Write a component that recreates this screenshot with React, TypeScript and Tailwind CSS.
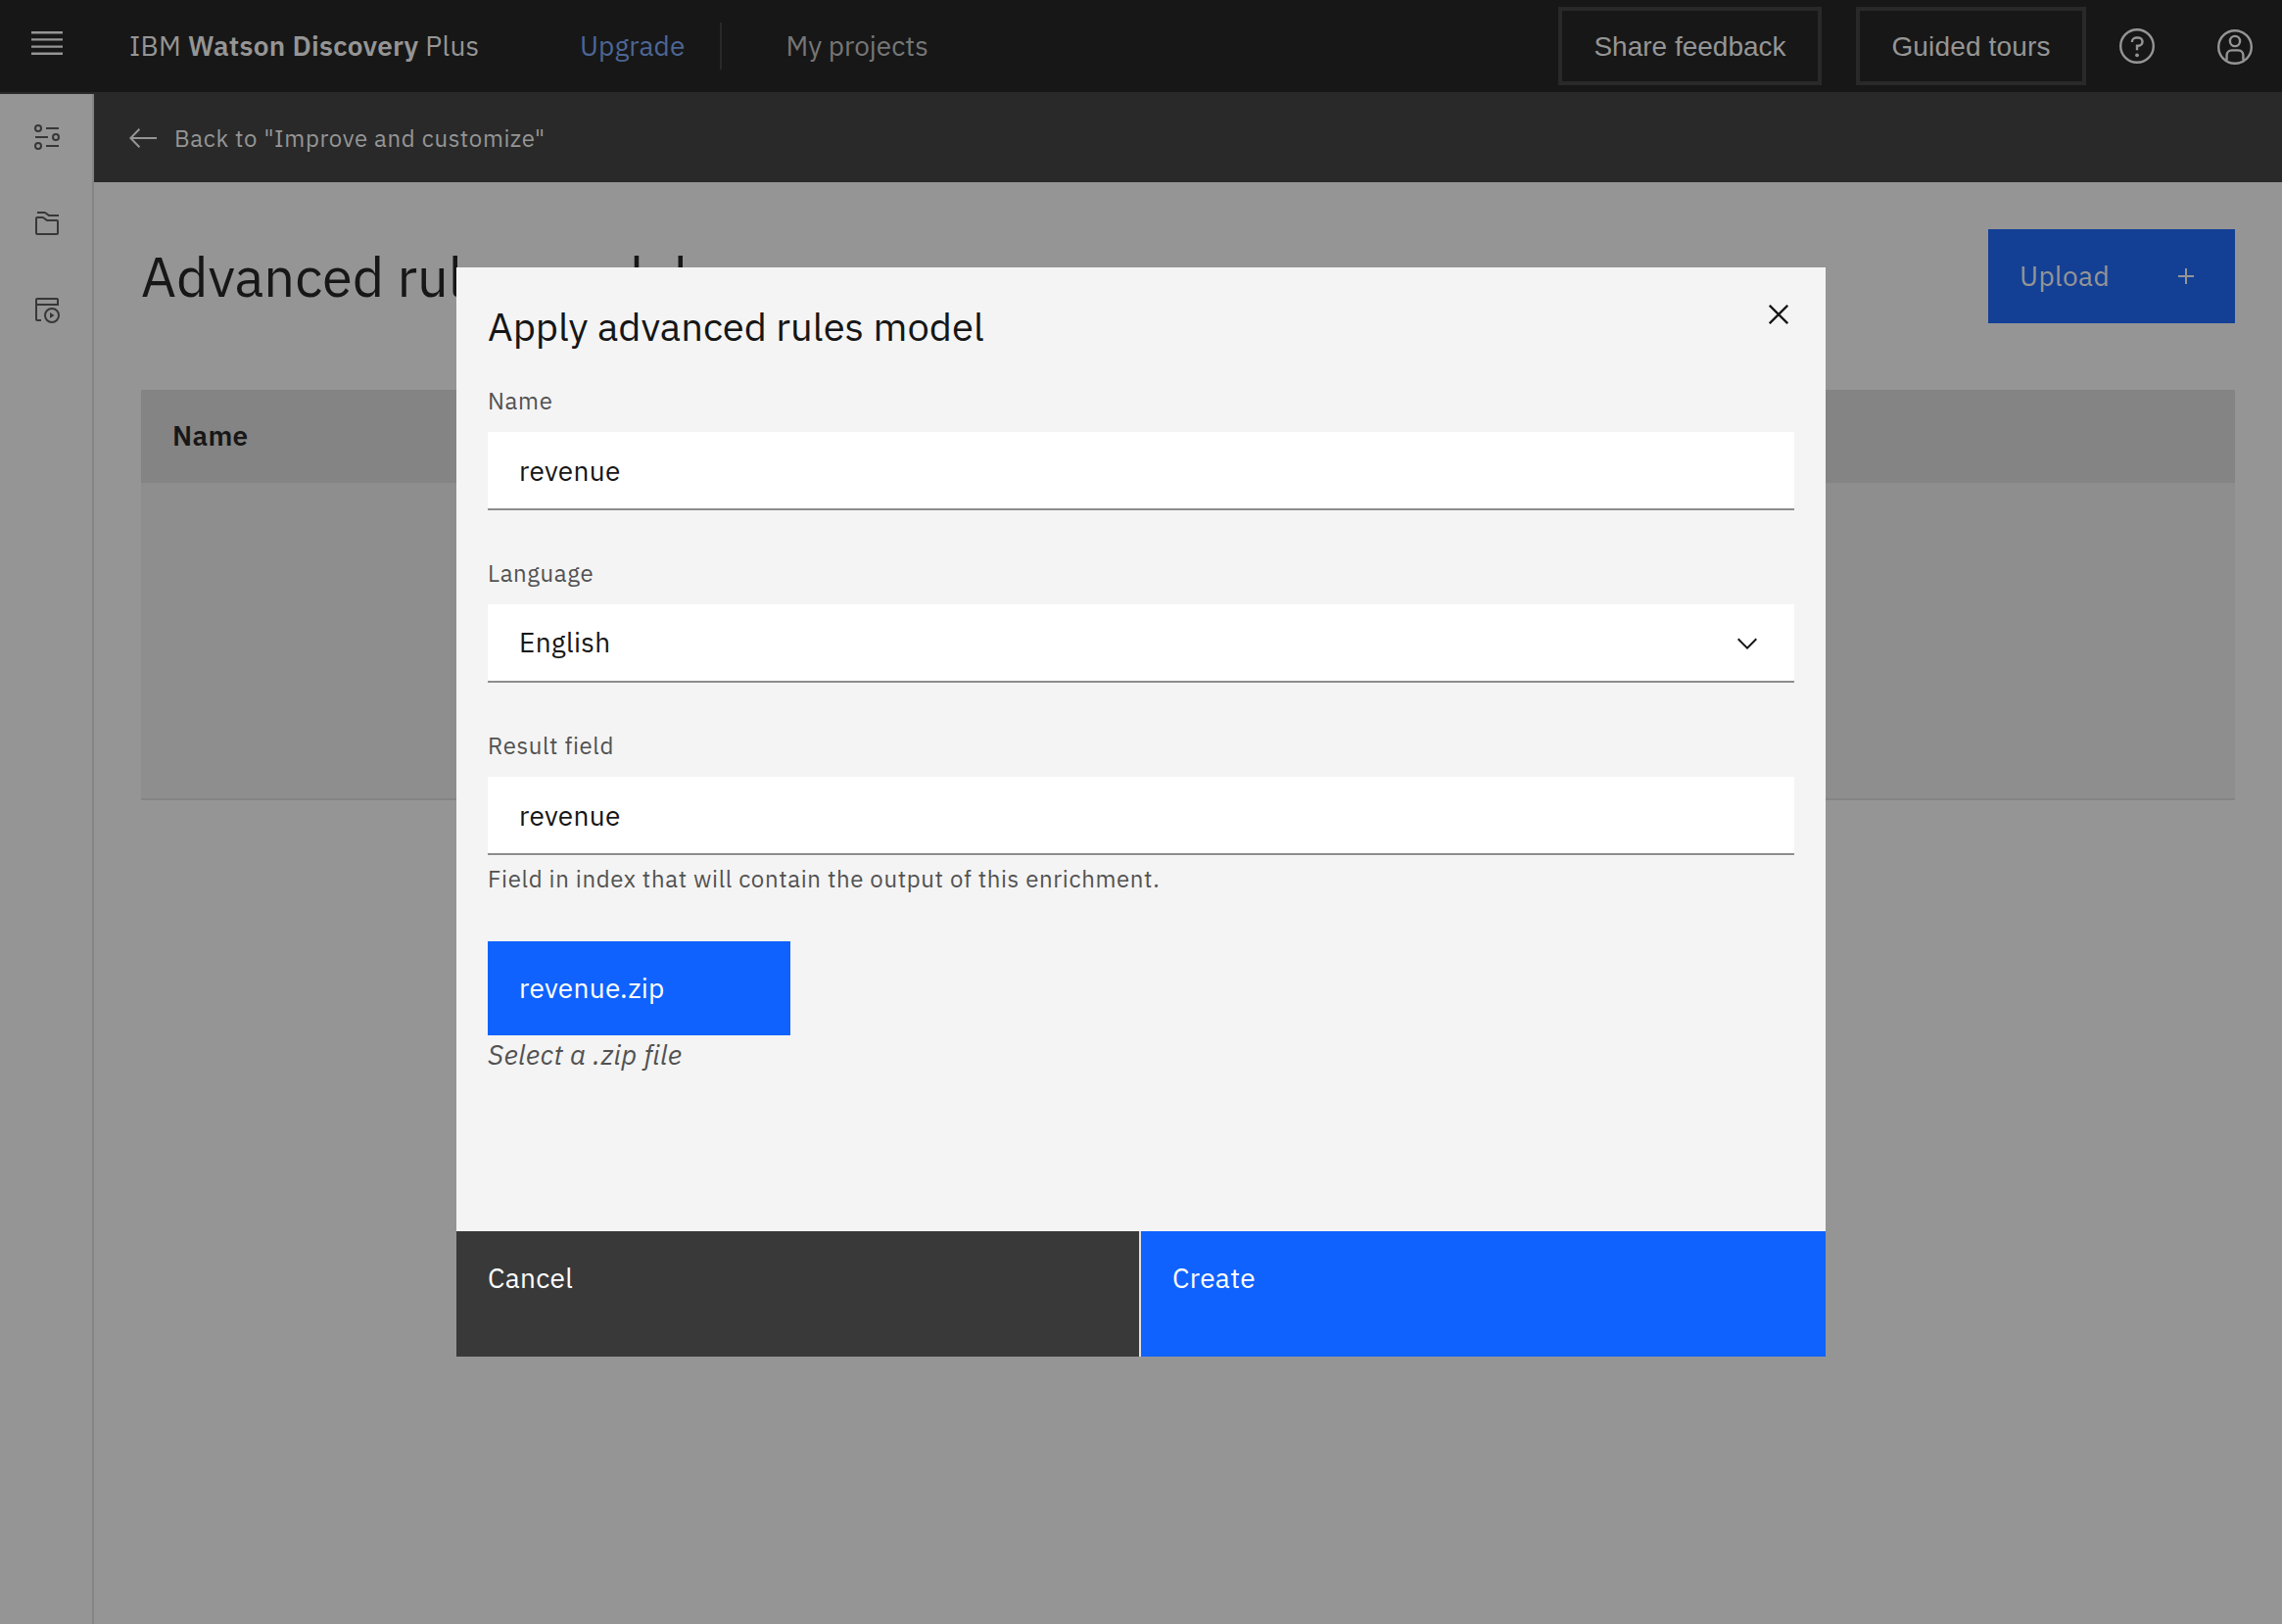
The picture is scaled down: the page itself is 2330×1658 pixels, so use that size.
import React from "react";

function HamburgerIcon() {
  return (
    <svg className="h-10 w-10 fill-[#959595]" viewBox="0 0 20 20">
      <path d="M2 14.8h16V16H2zM2 11.2h16v1.2H2zM2 7.6h16v1.2H2zM2 4h16v1.2H2z" />
    </svg>
  );
}

function HelpIcon() {
  return (
    <svg className="h-10 w-10" viewBox="0 0 40 40" fill="none" stroke="#959595" strokeWidth="2.4">
      <circle cx="20" cy="20" r="16.8" />
      <path d="M14.9 16v-.3a4.2 4.2 0 0 1 4.2-4.2h2.3a4.1 4.1 0 0 1 0 8.2H20v4.6" />
      <circle cx="20" cy="29.3" r="1.9" fill="#959595" stroke="none" />
    </svg>
  );
}

function UserIcon() {
  return (
    <svg className="h-10 w-10" viewBox="0 0 40 40" fill="none" stroke="#959595" strokeWidth="2.4">
      <circle cx="20" cy="20" r="16.8" />
      <circle cx="20" cy="14" r="5.1" />
      <path d="M11.6 33.6v-5.2a5 5 0 0 1 5-5h6.8a5 5 0 0 1 5 5v5.2" />
    </svg>
  );
}

function SlidersIcon() {
  return (
    <svg className="h-8 w-8" viewBox="0 0 32 32" fill="none" stroke="#373737" strokeWidth="2">
      <circle cx="7" cy="7" r="3" />
      <circle cx="25" cy="16" r="3" />
      <circle cx="7" cy="25" r="3" />
      <path d="M15 7h13M4 16h13M15 25h13" />
    </svg>
  );
}

function FoldersIcon() {
  return (
    <svg className="h-8 w-8 fill-[#373737]" viewBox="0 0 32 32">
      <path d="M26,28H6a2,2,0,0,1-2-2V11A2,2,0,0,1,6,9h5.67a2,2,0,0,1,1.2.4L16.33,12H26a2,2,0,0,1,2,2V26A2,2,0,0,1,26,28ZM11.67,11H6V26H26V14H15.67Z" />
      <path d="M28,9H17.67l-4-3H6V4h7.67a2,2,0,0,1,1.2.4L18.33,7H28Z" />
    </svg>
  );
}

function QueryRunIcon() {
  return (
    <svg className="h-8 w-8" viewBox="0 0 32 32" fill="none" stroke="#373737" strokeWidth="2">
      <path d="M10 27H6a1 1 0 0 1-1-1V6a1 1 0 0 1 1-1h20a1 1 0 0 1 1 1v5H5" />
      <circle cx="21" cy="22" r="7" />
      <path d="M19 19v6l4.5-3z" fill="#373737" stroke="none" />
    </svg>
  );
}

function BackArrowIcon() {
  return (
    <svg className="h-8 w-8" viewBox="0 0 32 32" fill="none" stroke="#959595" strokeWidth="2">
      <path d="M12.4 6.7 3.4 16l9 9.3M3.4 16H30" />
    </svg>
  );
}

function TextField({
  label,
  value,
  helper,
  dropdown,
}: {
  label: string;
  value: string;
  helper?: string;
  dropdown?: boolean;
}) {
  return (
    <div>
      <div className="text-2xl leading-8 tracking-[0.64px] text-[#525252]">{label}</div>
      <div className="mt-4 flex h-20 items-center justify-between border-b-2 border-[#8d8d8d] bg-white px-8 tracking-[0.32px]">
        <span className={dropdown ? "" : "pt-0.5"}>{value}</span>
        {dropdown && (
          <svg className="mt-0.5 h-8 w-8 fill-[#161616]" viewBox="0 0 16 16">
            <path d="M8 11 3 6l.7-.7L8 9.6l4.3-4.3.7.7z" />
          </svg>
        )}
      </div>
      {helper && (
        <div className="mt-2 text-2xl leading-8 tracking-[0.64px] text-[#525252]">{helper}</div>
      )}
    </div>
  );
}

function Header() {
  return (
    <header className="flex h-[94px] items-center bg-[#171717] text-[#959595]">
      <button className="ml-7 flex h-10 w-10 -translate-y-[3px]">
        <HamburgerIcon />
      </button>
      <div className="ml-[64px] w-[460px] whitespace-nowrap tracking-[0.26px]">
        IBM <span className="font-semibold">Watson Discovery</span> Plus
      </div>
      <a className="w-[143px] tracking-[0.1px] text-[#4c6695]">Upgrade</a>
      <div className="h-12 w-0.5 bg-[#292929]" />
      <a className="ml-[65.5px] text-[#767676]">My projects</a>
      <div className="ml-auto flex items-center font-['Liberation_Sans',Arial,sans-serif]">
        <button className="h-20 w-[269px] border-4 border-[#292929] pt-px text-center">
          Share feedback
        </button>
        <button className="ml-[35px] h-20 w-[235px] border-4 border-[#292929] pt-px text-center tracking-[0.16px]">
          Guided tours
        </button>
      </div>
      <button className="ml-8">
        <HelpIcon />
      </button>
      <button className="mr-7 ml-[60px] pt-0.5">
        <UserIcon />
      </button>
    </header>
  );
}

function Sidebar() {
  return (
    <nav className="mt-0.5 flex w-24 flex-1 flex-col items-center gap-14 border-r-2 border-[#848484] bg-[#959595] pt-7 pl-0.5">
      <SlidersIcon />
      <FoldersIcon />
      <QueryRunIcon />
    </nav>
  );
}

function Dialog() {
  return (
    <div className="absolute top-[273px] left-[466px] flex h-[1112px] w-[1398px] flex-col bg-[#f4f4f4] text-[#161616]">
      <div className="flex flex-1 flex-col px-8 pt-[34px]">
        <div className="flex justify-between">
          <h2 className="text-[40px] leading-[52px]">Apply advanced rules model</h2>
          <button className="-mt-[6px] flex h-10 w-8 items-center justify-center">
            <svg className="h-5 w-5" viewBox="0 0 20 20" fill="none" stroke="#161616" strokeWidth="2.3">
              <path d="M.8.8l18.4 18.4M19.2.8.8 19.2" />
            </svg>
          </button>
        </div>
        <div className="mt-[34px] flex flex-col gap-12">
          <TextField label="Name" value="revenue" />
          <TextField label="Language" value="English" dropdown />
          <TextField
            label="Result field"
            value="revenue"
            helper="Field in index that will contain the output of this enrichment."
          />
          <div>
            <button className="flex h-24 w-[309px] items-center bg-[#0f62fe] px-8 tracking-[0.32px] text-white">
              revenue.zip
            </button>
            <p className="mt-0.5 tracking-[0.32px] text-[#525252] italic">Select a .zip file</p>
          </div>
        </div>
      </div>
      <div className="flex h-32 gap-0.5 bg-[#e0e0e0] tracking-[0.32px] text-white">
        <button className="flex w-[697px] items-start bg-[#393939] px-8 pt-[30px]">Cancel</button>
        <button className="flex flex-1 items-start bg-[#0f62fe] px-8 pt-[30px]">Create</button>
      </div>
    </div>
  );
}

export default function App() {
  return (
    <div className="relative flex h-[1658px] w-[2330px] flex-col overflow-hidden bg-[#959595] font-['IBM_Plex_Sans',Roboto,sans-serif] text-[28px] leading-9 text-[#171717]">
      <Header />
      <div className="flex flex-1">
        <div className="flex flex-col bg-[#292929]">
          <Sidebar />
        </div>
        <main className="flex-1">
          <div className="flex h-[92px] items-center gap-4 bg-[#292929] pt-0.5 pl-[34px] text-2xl tracking-[0.64px] text-[#959595]">
            <BackArrowIcon />
            <span>Back to "Improve and customize"</span>
          </div>
          <div className="px-12 pt-12">
            <div className="flex h-24 items-center justify-between">
              <h1 className="text-[56px] leading-[72px]">Advanced rules model</h1>
              <button className="flex h-24 w-[252px] items-center justify-between bg-[#134095] pr-[41px] pl-8 tracking-[0.4px] text-[#959595]">
                Upload
                <svg className="h-[18px] w-[18px]" viewBox="0 0 18 18" stroke="#959595" strokeWidth="2">
                  <path d="M9 1v16M1 9h16" />
                </svg>
              </button>
            </div>
            <div className="mt-[68px] border-b-2 border-[#848484]">
              <div className="flex h-[95px] items-center bg-[#848484] px-8 pb-0.5 font-semibold tracking-[0.32px]">
                Name
              </div>
              <div className="h-[322px] bg-[#8e8e8e]" />
            </div>
          </div>
        </main>
      </div>
      <Dialog />
    </div>
  );
}
